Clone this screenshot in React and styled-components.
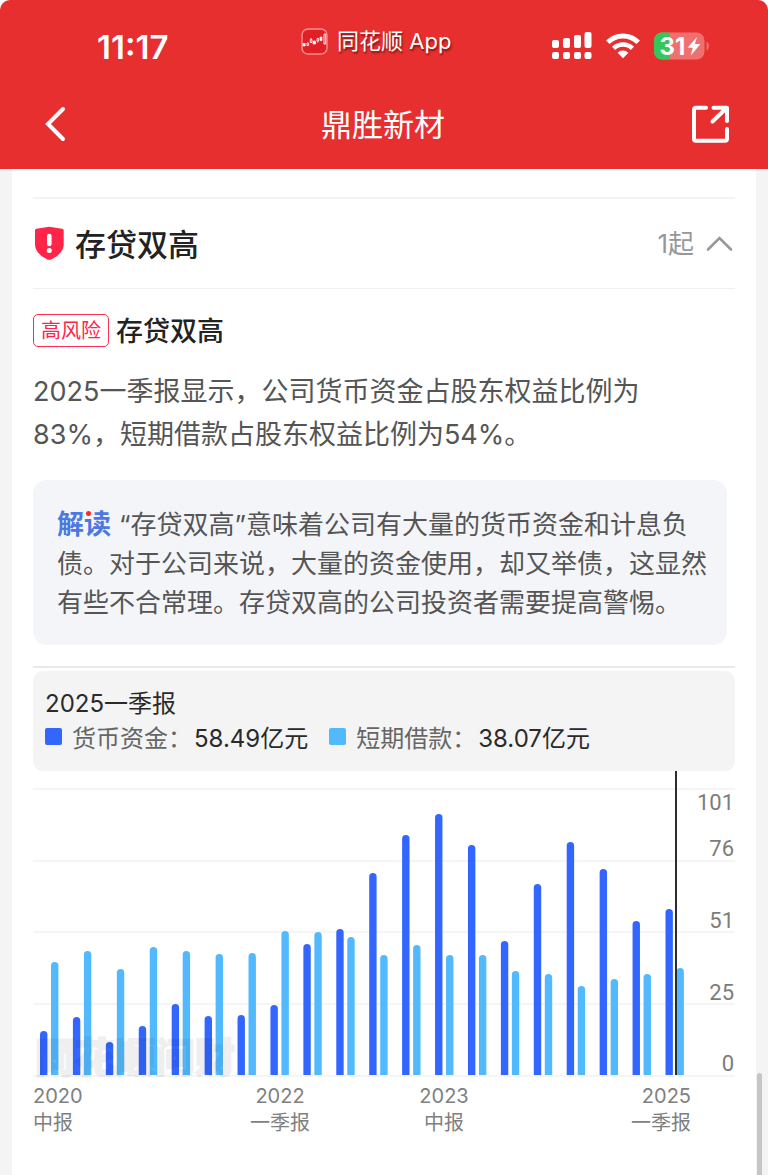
import React, { useState } from "react";
import styled, { createGlobalStyle } from "styled-components";

const GlobalStyle = createGlobalStyle`
  *, *::before, *::after { box-sizing: border-box; }
  body {
    margin: 0;
    background: #fff;
    color: #222;
    font-family: Inter, "Noto Sans CJK SC", sans-serif;
  }
  h1, h2, h3, p, dl, dd { margin: 0; }
  button {
    border: 0;
    padding: 0;
    background: none;
    color: inherit;
    font: inherit;
    cursor: pointer;
  }
  svg { display: block; }
`;

const Page = styled.div`
  position: relative;
  display: flex;
  flex-direction: column;
  min-height: 100vh;
`;

const Header = styled.header`
  padding-bottom: 13px;
  border-radius: 10px 10px 0 0;
  background: #e72f2f;
  color: #fff;
`;

const StatusBar = styled.div`
  display: grid;
  grid-template-columns: 17fr auto 18fr;
  align-items: center;
  height: 92px;
`;

const Time = styled.time`
  padding: 2px 0 0 97px;
  font-size: 33px;
  font-weight: 600;
  line-height: 40px;
`;

const AppLabel = styled.div`
  display: flex;
  align-items: center;
  gap: 9px;
  padding: 0 0 10px 2px;
  font-size: 22px;
  line-height: 26px;
  text-shadow: 1px 2px 2px rgba(60, 0, 0, 0.6);
`;

const StatusIcons = styled.div`
  display: flex;
  align-items: center;
  justify-content: flex-end;
  gap: 14px;
  padding-right: 58px;
`;

const NavBar = styled.nav`
  display: grid;
  grid-template-columns: 1fr auto 1fr;
  align-items: center;
  height: 64px;
  padding: 0 36px 0 34px;
`;

const NavTitle = styled.h1`
  padding-top: 2px;
  font-size: 31px;
  font-weight: 400;
  line-height: 40px;
`;

const NavButton = styled.button`
  justify-self: ${(p) => p.$side};
`;

const Main = styled.main`
  flex: 1;
  display: flex;
  padding: 0 12px;
  background: #f4f4f4;
`;

const Card = styled.section`
  flex: 1;
  min-width: 0;
  padding: 28px 21px 40px;
  background: #fff;
`;

const RiskHeader = styled.div`
  display: flex;
  align-items: center;
  justify-content: space-between;
  height: 92px;
  border-top: 2px solid #f4f4f4;
  border-bottom: 1px solid #f0f0f0;
`;

const RiskTitle = styled.div`
  display: flex;
  align-items: center;
  gap: 10px;

  h2 {
    padding-top: 2px;
    font-size: 31px;
    font-weight: 500;
    line-height: 40px;
  }
`;

const Toggle = styled.button`
  display: flex;
  align-items: center;
  gap: 11px;
  color: #97989a;
  font-size: 26px;
  line-height: 32px;
`;

const ItemHeader = styled.div`
  display: flex;
  align-items: center;
  gap: 7px;
  margin-top: 25px;
`;

const Tag = styled.span`
  padding: 1px 7px 0;
  border: 1px solid #ff2d50;
  border-radius: 5px;
  color: #ff2448;
  font-size: 20px;
  line-height: 30px;
`;

const ItemTitle = styled.h3`
  padding-top: 2px;
  font-size: 27px;
  font-weight: 500;
  line-height: 31px;
`;

const Summary = styled.p`
  margin-top: 23px;
  padding-right: 20px;
  color: #555;
  font-size: 27px;
  line-height: 43px;
`;

const Note = styled.p`
  margin: 24px 8px 0 0;
  padding: 25px 18px 23px 24px;
  border-radius: 14px;
  background: #f4f5f8;
  color: #555;
  font-size: 26px;
  line-height: 39px;
`;

const NoteLabel = styled.strong`
  position: relative;
  margin-right: 8px;
  color: #4d78e2;
  font-size: 27px;
  font-weight: 700;

  &::after {
    content: "";
    position: absolute;
    top: 3px;
    left: 29px;
    width: 5px;
    height: 5px;
    border-radius: 50%;
    background: #fb2a2a;
    box-shadow: 0 0 0 2px #f4f5f8;
  }
`;

const ChartPanel = styled.div`
  margin-top: 21px;
  padding-top: 3px;
  border-top: 2px solid #e9e9e9;
`;

const Legend = styled.div`
  padding: 15px 12px;
  border-radius: 10px;
  background: #f4f4f4;
  color: #2a2a2a;
  font-size: 24px;
  line-height: 35px;
`;

const LegendList = styled.dl`
  display: flex;
  flex-wrap: wrap;
  gap: 0 21px;
`;

const LegendItem = styled.div`
  display: flex;
  align-items: center;
  gap: 2px;

  dt {
    display: flex;
    align-items: center;
    gap: 10px;
    color: #666;
  }
`;

const Swatch = styled.span`
  width: 17px;
  height: 17px;
  margin-bottom: 4px;
  border-radius: 2px;
  background: ${(p) => p.$color};
`;

const Chart = styled.svg`
  width: 100%;
  height: auto;
`;

const Tick = styled.text`
  fill: #7c7c7c;
  font-family: Roboto, sans-serif;
  font-size: 22px;
`;

const Period = styled.text`
  fill: #808080;
  font-size: 20px;
`;

const Watermark = styled.text`
  fill: #000;
  stroke: #000;
  stroke-width: 2px;
  opacity: 0.06;
  font-size: 40px;
  font-weight: 900;
`;

const ScrollThumb = styled.div`
  position: absolute;
  right: 6px;
  bottom: 0;
  width: 5px;
  height: 102px;
  border-radius: 3px 3px 0 0;
  background: #c5c5c5;
`;

const CASH = "#3366ff";
const LOAN = "#52b9ff";

const BASE = 304;
// Bar heights for each report period: [cash, short-term loans].
const PERIODS = [
  [44, 113], [58, 124], [33, 106], [49, 128], [71, 124],
  [59, 121], [60, 122], [70, 144], [131, 143], [146, 138],
  [202, 120], [240, 130], [261, 120], [230, 120], [134, 104],
  [191, 101], [233, 89], [206, 96], [154, 101], [166, 107],
];
const GRID = [18, 90, 161, 233, 305];
const TICKS = [["101", 39], ["76", 85], ["51", 157], ["25", 229], ["0", 300]];
const LABELS = [
  ["2020", "中报", 0, "start"],
  ["2022", "一季报", 247, "middle"],
  ["2023", "中报", 411, "middle"],
  ["2025", "一季报", 658, "end"],
];

const barPath = (x, h) =>
  `M${x} ${BASE}V${BASE - h + 3.7}a3.7 3.7 0 0 1 7.4 0V${BASE}z`;

function AppIcon() {
  return (
    <svg width="27" height="27" viewBox="0 0 27 27" fill="none" stroke="#fff" aria-hidden="true">
      <rect x="1" y="1" width="25" height="25" rx="6" fill="#e02026" stroke="#f58f8f" strokeWidth="1.4" />
      <path d="M1.800 15.400h2.400v2.600H1.800zM12 13h2.600v3H12zM19 9h2v3.600h-2z" fill="#fff" strokeWidth=".6" />
      <path d="M6 15h1.600v2.500H6zM9.300 11.500h1.600v3H9.300zM10.100 10v1.500M16 10.500h1.600v2.500H16zM16.800 13v1.500M23 6h1.700v10H23z" strokeWidth=".9" />
    </svg>
  );
}

function SignalIcon() {
  const bars = [[0, 8, 8], [11, 6, 10], [22, 3, 13], [32.5, 0, 16]];
  return (
    <svg width="40" height="28" viewBox="0 0 40 28" fill="#fff" aria-hidden="true">
      {bars.map(([x, y, h]) => (
        <React.Fragment key={x}>
          <rect x={x} y={y} width="7" height={h} rx="2" />
          <rect x={x} y="20" width="7" height="7" rx="2" />
        </React.Fragment>
      ))}
    </svg>
  );
}

function WifiIcon() {
  return (
    <svg width="34" height="26" viewBox="0 0 34 26" fill="none" stroke="#fff" aria-hidden="true">
      <path d="M1.800 9.300A21.500 21.500 0 0 1 32.200 9.300" strokeWidth="5" />
      <path d="M7.600 15.400A13.200 13.200 0 0 1 26.400 15.400" strokeWidth="4.600" />
      <path d="M17 25.300L11.600 19.800A7.700 7.700 0 0 1 22.400 19.800z" fill="#fff" stroke="none" />
    </svg>
  );
}

function BatteryIcon() {
  return (
    <svg width="56" height="28" viewBox="0 0 56 28" role="img" aria-label="31%">
      <rect y=".5" width="50.500" height="27" rx="8" fill="#f07070" />
      <path d="M15.500 .5v27H8a8 8 0 0 1-8-8V8.500a8 8 0 0 1 8-8z" fill="#34c759" />
      <path d="M52.500 9.500q2.500 1.500 2.500 4.500t-2.500 4.500z" fill="#f07070" />
      <text x="5.500" y="22.500" fill="#fff" fontSize="24" fontWeight="700">31</text>
      <path d="M43 5L33.500 15.800h5.300L36.800 23.500L46.500 12h-5.700z" fill="#fff" />
    </svg>
  );
}

function BackIcon() {
  return (
    <svg width="42" height="42" viewBox="0 0 42 42" fill="none" stroke="#fff" strokeWidth="4" strokeLinecap="round" strokeLinejoin="miter" aria-hidden="true">
      <path d="M29 6L14 21L29 36" />
    </svg>
  );
}

function ShareIcon() {
  return (
    <svg width="42" height="42" viewBox="0 0 42 42" fill="none" stroke="#fff" strokeWidth="4" strokeLinecap="round" strokeLinejoin="round" aria-hidden="true">
      <path d="M16 4.700H6q-2 0-2 2v29q0 2 2 2h29q2 0 2-2V26" />
      <path d="M23.500 4.700H37v13.300M22.500 18.500L36 5.500" />
    </svg>
  );
}

function ShieldIcon() {
  return (
    <svg width="32" height="36" viewBox="0 0 32 36" aria-hidden="true">
      <path d="M2 4.500q0-1.500 1.500-1.700C8 2 12 1.800 16.300 .8C20.500 1.800 24.500 2 29 2.800q1.700 .2 1.700 1.700V18c0 7-5 11.500-11.500 15q-2.900 1.700-5.800 0C7 29.500 2 25 2 18z" fill="#ff2448" />
      <path d="M16.300 10v8" stroke="#fff" strokeWidth="4.600" strokeLinecap="round" />
      <circle cx="16.300" cy="24.500" r="2.500" fill="#fff" />
    </svg>
  );
}

function ChevronIcon({ open }) {
  return (
    <svg width="30" height="20" viewBox="0 0 30 20" fill="none" stroke="currentColor" strokeWidth="2.600" strokeLinecap="round" aria-hidden="true">
      <path d={open ? "M3 15.500L14.500 4L26 15.500" : "M3 4L14.500 15.500L26 4"} />
    </svg>
  );
}

function BarChart() {
  return (
    <Chart viewBox="0 0 702 364" role="img" aria-label="货币资金与短期借款">
      {GRID.map((y) => (
        <rect key={y} y={y - 1} width="702" height="2" fill="#f5f5f5" />
      ))}
      {PERIODS.map(([cash, loan], i) => (
        <g key={i}>
          <path d={barPath(7 + i * 32.92, cash)} fill={CASH} />
          <path d={barPath(18 + i * 32.92, loan)} fill={LOAN} />
        </g>
      ))}
      <Watermark x="2" y="301">同花顺问财</Watermark>
      <rect x="642" width="2" height={BASE} fill="#2c2c2c" />
      {TICKS.map(([label, y]) => (
        <Tick key={label} x="701" y={y} textAnchor="end">{label}</Tick>
      ))}
      {LABELS.map(([year, term, x, anchor]) => (
        <g key={year} textAnchor={anchor}>
          <Period x={x} y="332">{year}</Period>
          <Period x={x} y="359">{term}</Period>
        </g>
      ))}
    </Chart>
  );
}

export default function App() {
  const [open, setOpen] = useState(true);
  return (
    <Page>
      <GlobalStyle />
      <Header>
        <StatusBar>
          <Time>11:17</Time>
          <AppLabel>
            <AppIcon />
            <span>同花顺 App</span>
          </AppLabel>
          <StatusIcons>
            <SignalIcon />
            <WifiIcon />
            <BatteryIcon />
          </StatusIcons>
        </StatusBar>
        <NavBar>
          <NavButton $side="start" aria-label="返回"><BackIcon /></NavButton>
          <NavTitle>鼎胜新材</NavTitle>
          <NavButton $side="end" aria-label="分享"><ShareIcon /></NavButton>
        </NavBar>
      </Header>
      <Main>
        <Card>
          <RiskHeader>
            <RiskTitle>
              <ShieldIcon />
              <h2>存贷双高</h2>
            </RiskTitle>
            <Toggle aria-expanded={open} onClick={() => setOpen(!open)}>
              1起
              <ChevronIcon open={open} />
            </Toggle>
          </RiskHeader>
          {open && (
            <>
              <ItemHeader>
                <Tag>高风险</Tag>
                <ItemTitle>存贷双高</ItemTitle>
              </ItemHeader>
              <Summary>
                2025一季报显示，公司货币资金占股东权益比例为83%，短期借款占股东权益比例为54%。
              </Summary>
              <Note>
                <NoteLabel>解读</NoteLabel>
                “存贷双高”意味着公司有大量的货币资金和计息负债。对于公司来说，大量的资金使用，却又举债，这显然有些不合常理。存贷双高的公司投资者需要提高警惕。
              </Note>
              <ChartPanel>
                <Legend>
                  <div>2025一季报</div>
                  <LegendList>
                    <LegendItem>
                      <dt><Swatch $color={CASH} />货币资金：</dt>
                      <dd>58.49亿元</dd>
                    </LegendItem>
                    <LegendItem>
                      <dt><Swatch $color={LOAN} />短期借款：</dt>
                      <dd>38.07亿元</dd>
                    </LegendItem>
                  </LegendList>
                </Legend>
                <BarChart />
              </ChartPanel>
            </>
          )}
        </Card>
      </Main>
      <ScrollThumb />
    </Page>
  );
}
